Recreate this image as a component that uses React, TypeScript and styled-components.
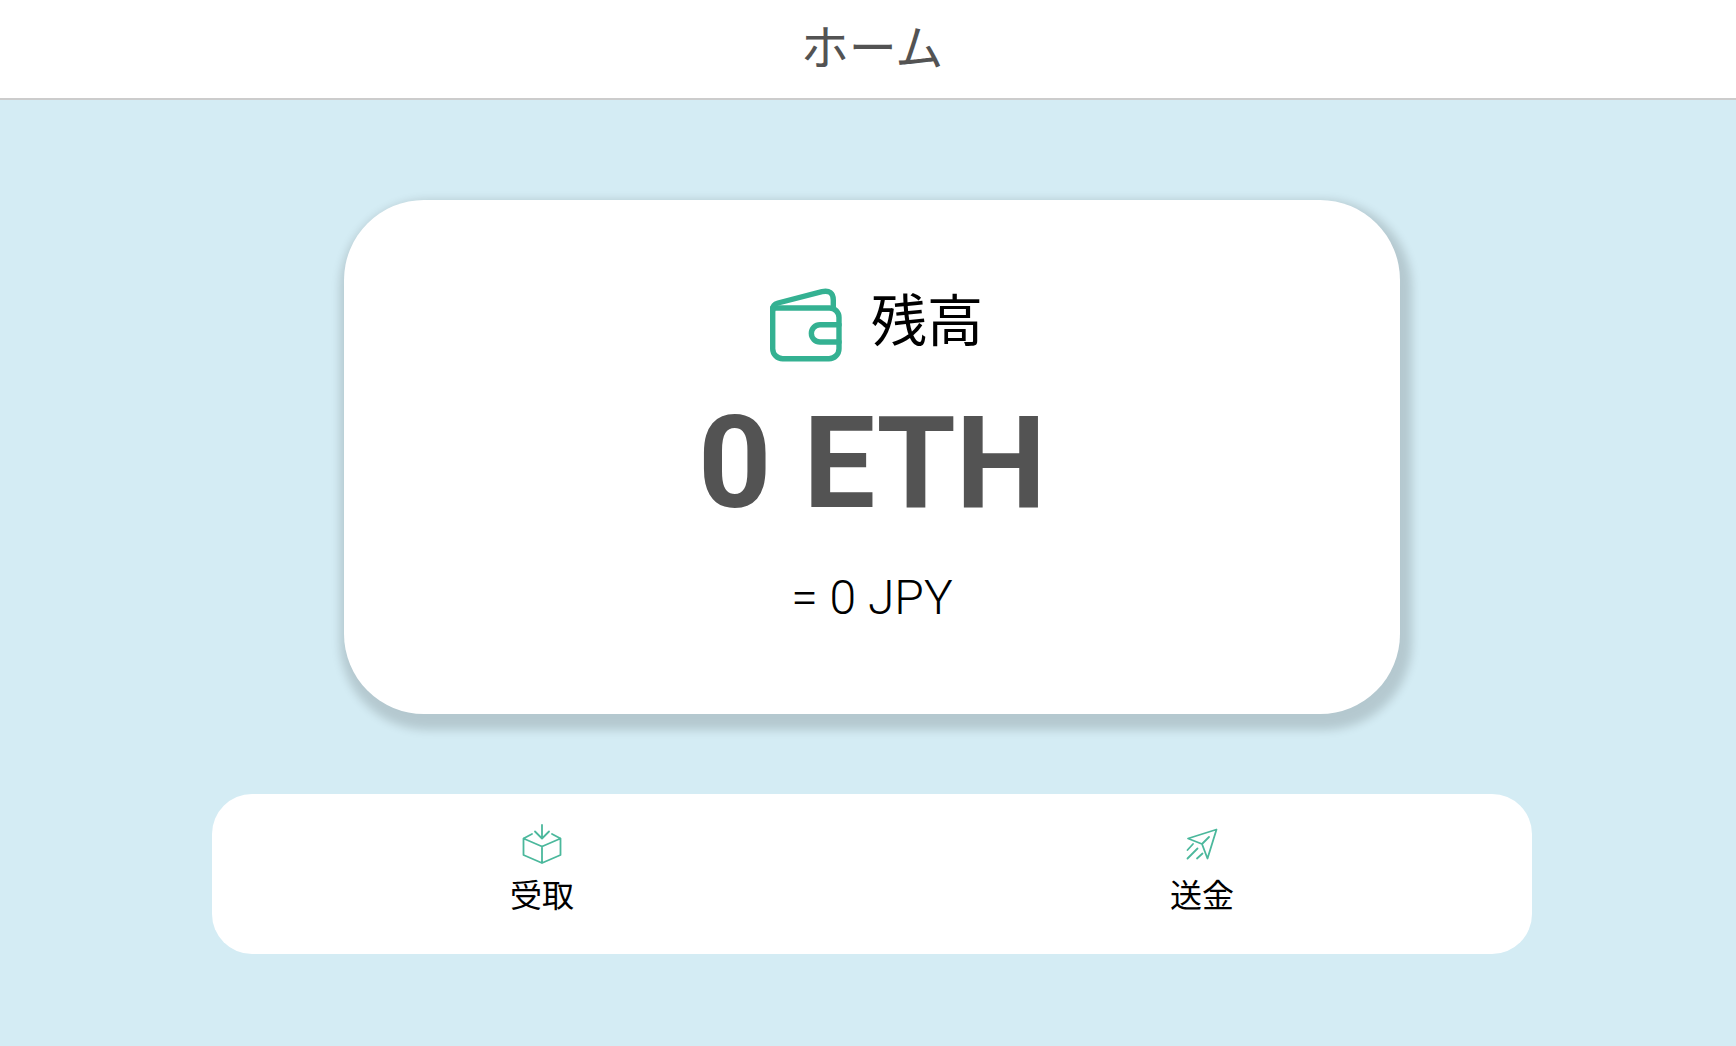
import React from "react";
import styled, { createGlobalStyle } from "styled-components";

const GlobalStyle = createGlobalStyle`
  *, *::before, *::after { box-sizing: border-box; }
  body {
    margin: 0;
    background: #d4ecf4;
    color: #000;
    font-family: Roboto, "Noto Sans CJK JP", sans-serif;
  }
`;

const Header = styled.header`
  display: flex;
  align-items: center;
  justify-content: center;
  height: 100px;
  padding-left: 8px;
  background: #fff;
  border-bottom: 2px solid #ccc;
`;

const Title = styled.h1`
  margin: 0;
  color: #535353;
  font-size: 48px;
  font-weight: 400;
  line-height: 72px;
`;

const Main = styled.main`
  display: flex;
  flex-direction: column;
  align-items: center;
  gap: 80px;
  padding: 100px 0 92px 8px;
`;

const BalanceCard = styled.section`
  display: flex;
  flex-direction: column;
  align-items: center;
  width: 62%;
  max-width: 1056px;
  padding: 80px 40px;
  border-radius: 80px;
  background: #fff;
  box-shadow: 4px 8px 10px 8px rgba(0, 0, 0, 0.15);
`;

const BalanceHeading = styled.div`
  display: flex;
  align-items: center;
  gap: 24px;
  padding-left: 6px;
`;

const BalanceLabel = styled.h2`
  margin: 0;
  font-size: 56px;
  font-weight: 400;
  line-height: 84px;
`;

const Amount = styled.p`
  margin: 20px 0;
  color: #535353;
  font-size: 128px;
  font-weight: 700;
  line-height: 158px;
`;

const Converted = styled.p`
  margin: 0;
  font-size: 48px;
  font-weight: 300;
  line-height: 72px;
`;

const Actions = styled.nav`
  display: grid;
  grid-template-columns: 1fr 1fr;
  width: 77%;
  max-width: 1320px;
  height: 160px;
  border-radius: 40px;
  background: #fff;
`;

const ActionButton = styled.button`
  display: flex;
  flex-direction: column;
  align-items: center;
  gap: 8px;
  padding: 30px 0 0;
  border: 0;
  background: none;
  color: inherit;
  font: inherit;
  font-size: 32px;
  line-height: 48px;
  cursor: pointer;
`;

const Icon = styled.svg<{ $size: number; $color: string; $weight: number }>`
  display: block;
  width: ${(p) => p.$size}px;
  height: ${(p) => p.$size}px;
  fill: none;
  stroke: ${(p) => p.$color};
  stroke-width: ${(p) => p.$weight};
  stroke-linecap: round;
  stroke-linejoin: round;
`;

const WalletIcon = () => (
  <Icon viewBox="0 0 80 80" $size={80} $color="#34b192" $weight={5.4} aria-hidden="true">
    <path d="M5.7 26V66.700a10 10 0 0 0 10 10H62a10 10 0 0 0 10-10V35.500a9.500 9.500 0 0 0-9.500-9.500Z" />
    <path d="M5.700 28V27Q5.700 22.500 11 21L55 9.700Q66.300 7.500 66.300 18V26" />
    <path d="M72 42.700H53a8.650 8.650 0 0 0 0 17.300H72" />
  </Icon>
);

const ReceiveIcon = () => (
  <Icon viewBox="0 0 40 40" $size={40} $color="#4bb89c" $weight={1.8} aria-hidden="true">
    <path d="M20 1V14M13 7.5L20 14.5L27 7.5" />
    <path d="M10 10L1.5 14.5V31L20 39L38.5 31V14.5L30 10M1.5 14.5L20 22.5L38.5 14.5M20 22.5V39" />
  </Icon>
);

const SendIcon = () => (
  <Icon viewBox="0 0 40 40" $size={40} $color="#4bb89c" $weight={1.8} aria-hidden="true">
    <path d="M34.5 5.5L6 14.5L20 20L25.5 34.5ZM20 20L27 13" />
    <path d="M11 20L5.5 26M15.5 24.5L5.5 34.5M20.5 29.5L15 34.5" />
  </Icon>
);

export default function App() {
  return (
    <>
      <GlobalStyle />
      <Header>
        <Title>ホーム</Title>
      </Header>
      <Main>
        <BalanceCard>
          <BalanceHeading>
            <WalletIcon />
            <BalanceLabel>残高</BalanceLabel>
          </BalanceHeading>
          <Amount>0 ETH</Amount>
          <Converted>= 0 JPY</Converted>
        </BalanceCard>
        <Actions>
          <ActionButton type="button">
            <ReceiveIcon />
            受取
          </ActionButton>
          <ActionButton type="button">
            <SendIcon />
            送金
          </ActionButton>
        </Actions>
      </Main>
    </>
  );
}
